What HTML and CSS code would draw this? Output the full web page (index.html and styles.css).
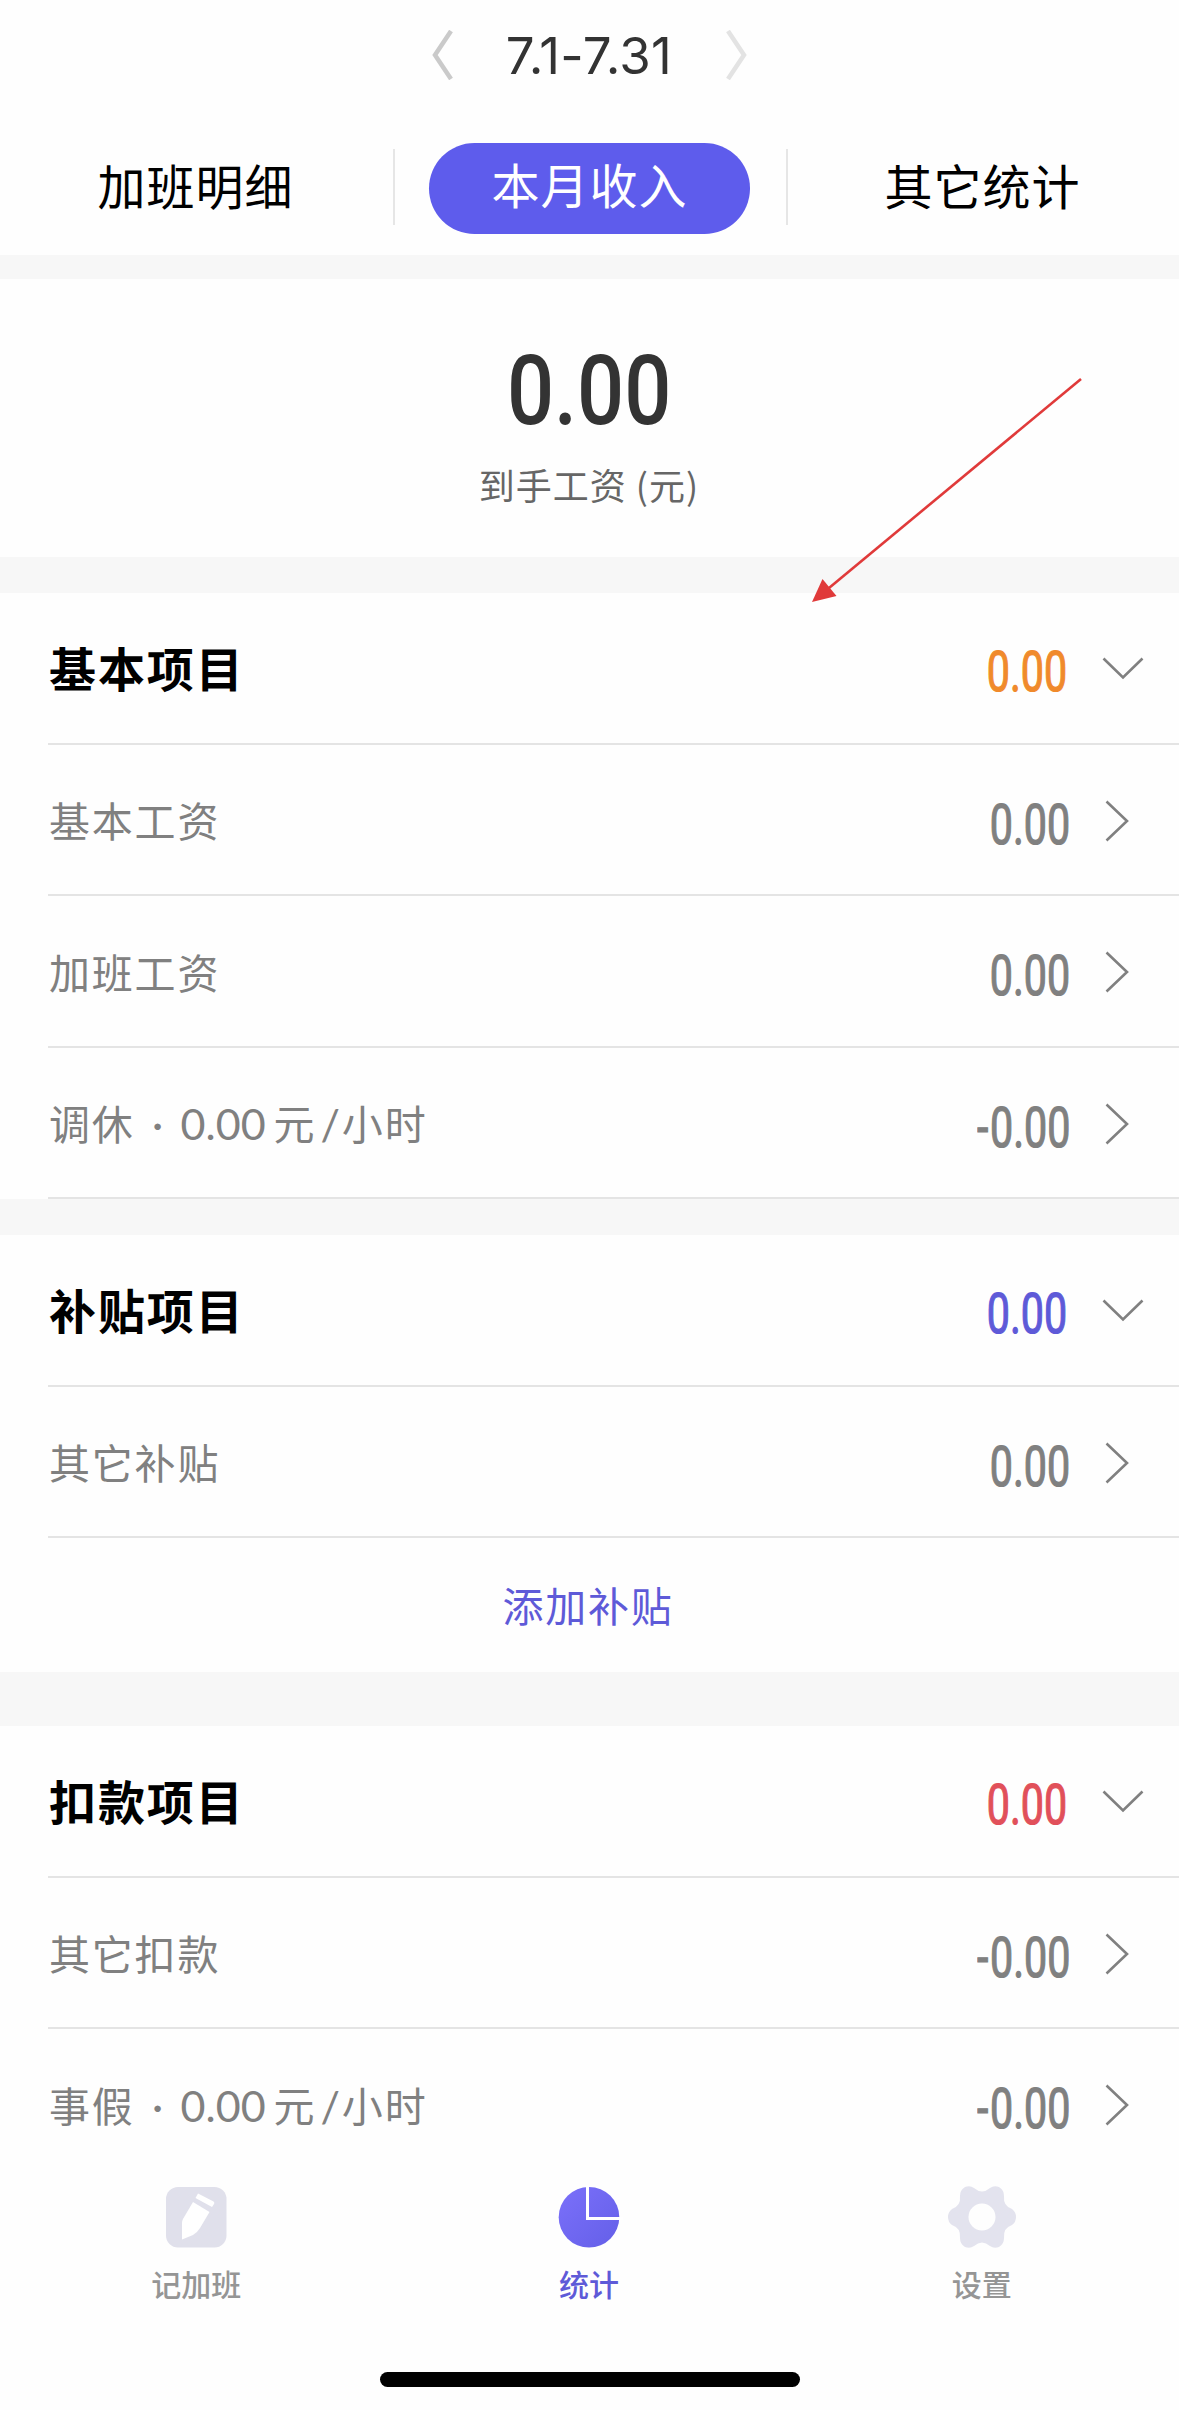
FILE: index.html
```html
<!DOCTYPE html>
<html lang="zh-CN">
<head>
<meta charset="utf-8">
<title>本月收入</title>
<link rel="stylesheet" href="styles.css">
</head>
<body>
<div class="screen">
  <header class="month">
    <svg class="month-arrow" width="24" height="50" viewBox="0 0 24 50"><path d="M20 1L4 25L20 49" fill="none" stroke="#cacaca" stroke-width="4.5"/></svg>
    <span class="month-text">7.1-7.31</span>
    <svg class="month-arrow" width="24" height="50" viewBox="0 0 24 50"><path d="M4 1L20 25L4 49" fill="none" stroke="#e3e3e3" stroke-width="4.5"/></svg>
  </header>
  <nav class="tabs">
    <div class="tab">加班明细</div>
    <div class="tab current"><span class="pill">本月收入</span></div>
    <div class="tab">其它统计</div>
  </nav>
  <section class="total">
    <div class="total-value">0.00</div>
    <div class="total-label">到手工资 (元)</div>
  </section>

  <section class="group">
    <div class="row head"><span class="name">基本项目</span><span class="value orange">0.00</span><svg class="down" width="42" height="24" viewBox="0 0 42 24"><path d="M1.500 1.500L21 20.500L40.500 1.500"/></svg></div>
    <div class="row"><span class="name">基本工资</span><span class="value">0.00</span><svg class="right" width="24" height="42" viewBox="0 0 24 42"><path d="M1.500 1.500L22 21L1.500 40.500"/></svg></div>
    <div class="row"><span class="name">加班工资</span><span class="value">0.00</span><svg class="right" width="24" height="42" viewBox="0 0 24 42"><path d="M1.500 1.500L22 21L1.500 40.500"/></svg></div>
    <div class="row"><span class="name">调休<span class="dot">·</span><span class="num">0.00</span>元<span class="slash">/</span>小时</span><span class="value"><span class="minus">-</span>0.00</span><svg class="right" width="24" height="42" viewBox="0 0 24 42"><path d="M1.500 1.500L22 21L1.500 40.500"/></svg></div>
  </section>

  <section class="group allowance">
    <div class="row head"><span class="name">补贴项目</span><span class="value blue">0.00</span><svg class="down" width="42" height="24" viewBox="0 0 42 24"><path d="M1.500 1.500L21 20.500L40.500 1.500"/></svg></div>
    <div class="row"><span class="name">其它补贴</span><span class="value">0.00</span><svg class="right" width="24" height="42" viewBox="0 0 24 42"><path d="M1.500 1.500L22 21L1.500 40.500"/></svg></div>
    <div class="add">添加补贴</div>
  </section>

  <section class="group deduction">
    <div class="row head"><span class="name">扣款项目</span><span class="value red">0.00</span><svg class="down" width="42" height="24" viewBox="0 0 42 24"><path d="M1.500 1.500L21 20.500L40.500 1.500"/></svg></div>
    <div class="row"><span class="name">其它扣款</span><span class="value"><span class="minus">-</span>0.00</span><svg class="right" width="24" height="42" viewBox="0 0 24 42"><path d="M1.500 1.500L22 21L1.500 40.500"/></svg></div>
    <div class="row"><span class="name">事假<span class="dot">·</span><span class="num">0.00</span>元<span class="slash">/</span>小时</span><span class="value"><span class="minus">-</span>0.00</span><svg class="right" width="24" height="42" viewBox="0 0 24 42"><path d="M1.500 1.500L22 21L1.500 40.500"/></svg></div>
  </section>

  <nav class="bottom">
    <div class="item">
      <svg width="68" height="64" viewBox="0 0 68 64">
        <rect x="4" y="2" width="60.500" height="60.500" rx="12" fill="#e0e0eb"/>
        <path d="M31 17L47.500 27L38 43Q35 48 31 50L20 54.500V38Q20 36 21 34Z" fill="#fff"/>
        <path d="M36 8.500L51.500 16.500Q53 17.500 52 19L50 22L33.500 13Z" fill="#fff"/>
      </svg>
      <span>记加班</span>
    </div>
    <div class="item active">
      <svg width="68" height="64" viewBox="0 0 68 64">
        <defs><linearGradient id="pie" x1="0" y1="0" x2="1" y2="1"><stop offset="0" stop-color="#7b70fa"/><stop offset="1" stop-color="#645fe8"/></linearGradient></defs>
        <circle cx="34" cy="32.200" r="30.300" fill="url(#pie)"/>
        <path d="M32.500 0V33.500H68" fill="none" stroke="#fff" stroke-width="3"/>
      </svg>
      <span>统计</span>
    </div>
    <div class="item">
      <svg width="68" height="64" viewBox="0 0 68 64">
        <path fill-rule="evenodd" fill="#e3e3ee" d="M17 2Q22 0 26 3Q34 10 42 3Q46 0 51 2Q56 5 56 11Q55 21 64 24Q68 27 68 32Q68 37 64 40Q55 43 56 53Q56 59 51 62Q46 64 42 61Q34 54 26 61Q22 64 17 62Q12 59 12 53Q13 43 4 40Q0 37 0 32Q0 27 4 24Q13 21 12 11Q12 5 17 2ZM34 18.500A13.500 13.500 0 1 0 34 45.500A13.500 13.500 0 1 0 34 18.500Z"/>
      </svg>
      <span>设置</span>
    </div>
  </nav>
  <div class="home"></div>

  <svg class="pointer" width="280" height="230" viewBox="0 0 280 230">
    <path d="M276 4L24 213" stroke="#e03a3a" stroke-width="2.600"/>
    <path d="M7 227L17.500 204L31.500 221Z" fill="#e03a3a"/>
  </svg>
</div>
</body>
</html>
```
FILE: styles.css
```css
* { box-sizing: border-box; }
body {
  margin: 0;
  background: #fefefe;
  font-family: "Noto Sans CJK SC", sans-serif;
  color: #000;
}
.screen {
  position: relative;
  width: 1179px;
  height: 2410px;
  overflow: hidden;
  display: flex;
  flex-direction: column;
}
.month {
  height: 110px;
  padding-right: 1px;
  display: flex;
  align-items: center;
  justify-content: center;
  gap: 50px;
}
.month-text {
  width: 169px;
  padding-top: 2px;
  display: flex;
  justify-content: center;
  font: 400 51px/60px Inter, sans-serif;
  letter-spacing: .3px;
  white-space: nowrap;
  color: #333;
}
.tabs {
  height: 145px;
  padding-top: 9px;
  display: grid;
  grid-template-columns: repeat(3, 1fr);
  align-items: center;
}
.tab {
  height: 76px;
  padding: 0 2px 6px 0;
  display: flex;
  align-items: center;
  justify-content: center;
  font-size: 48px;
  letter-spacing: 1px;
}
.tab + .tab { border-left: 2px solid #e6e6e6; }
.current { padding: 2px 2px 0 0; }
.pill {
  width: 321px;
  height: 91px;
  flex: none;
  border-radius: 46px;
  background: #5e5cec;
  color: #fff;
  text-align: center;
  line-height: 80px;
}
.total {
  height: 338px;
  border-top: 24px solid #f7f7f7;
  border-bottom: 36px solid #f7f7f7;
  display: flex;
  flex-direction: column;
  align-items: center;
  padding-top: 62px;
}
.total-value {
  font: 500 97px/100px Roboto, sans-serif;
  transform: scaleX(.855);
  color: #333;
}
.total-label {
  margin-top: 17px;
  padding-right: 1px;
  font-size: 36px;
  line-height: 52px;
  letter-spacing: 1px;
  color: #666;
}
.group { border-bottom: 36px solid #f7f7f7; }
.row {
  height: 151.5px;
  margin-left: 48px;
  padding: 3px 50px 0 0;
  border-bottom: 2px solid #e4e4e4;
  display: flex;
  align-items: center;
  color: #808080;
}
.name {
  flex: 1;
  padding: 0 0 3px 1px;
  font-size: 41px;
  letter-spacing: 1.8px;
}
.head { padding-right: 35px; }
.head .name {
  padding-bottom: 5px;
  font-size: 47px;
  font-weight: 700;
  letter-spacing: 1.9px;
  color: #000;
}
.value {
  font: 400 55px/60px Roboto, sans-serif;
  padding-top: 8px;
  margin-right: 35px;
  transform: scaleX(.75);
  transform-origin: right center;
  -webkit-text-stroke: 1.2px currentColor;
}
.head .value { padding-top: 5px; }
.minus { margin-right: 2px; }
.orange { color: #f08a2c; }
.blue { color: #5e5ad8; }
.red { color: #e1505a; }
.down, .right { fill: none; stroke: #808080; stroke-width: 2.6; flex: none; }
.dot {
  display: inline-block;
  width: 46px;
  text-align: center;
  letter-spacing: 0;
}
.dot, .num, .slash { font-family: Lato, sans-serif; font-size: 43px; }
.num { margin-right: 8px; letter-spacing: 0; }
.slash { margin: 0 2px 0 4px; letter-spacing: 0; }
.add {
  height: 134px;
  padding: 0 3px 3px 0;
  display: flex;
  align-items: center;
  justify-content: center;
  font-size: 41px;
  letter-spacing: 1.8px;
  color: #5e5ad8;
}
.allowance { border-bottom-width: 54px; }
.deduction { border-bottom: 0; }
.deduction .row:last-child { border-bottom-color: transparent; }
.bottom {
  display: grid;
  grid-template-columns: repeat(3, 1fr);
  padding: 4px 1px 0 0;
}
.item {
  display: flex;
  flex-direction: column;
  align-items: center;
  gap: 12px;
  font-size: 30px;
  font-weight: 500;
  line-height: 44px;
  color: #959595;
}
.item.active { color: #5e5ad8; }
.home {
  width: 420px;
  height: 15px;
  margin: auto auto 23px;
  border-radius: 8px;
  background: #000;
}
.pointer { position: absolute; left: 805px; top: 375px; }
```
